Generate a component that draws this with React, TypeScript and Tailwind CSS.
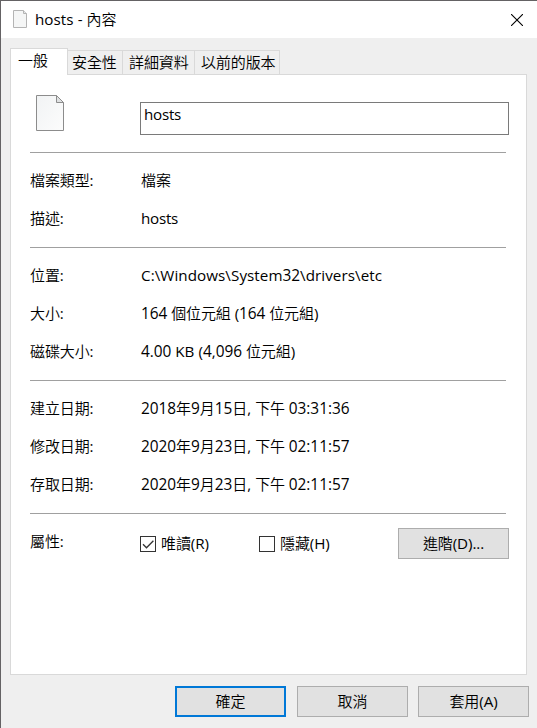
import type { ReactNode } from "react";

// Splits a string into Latin and CJK runs so that each keeps its own metrics.
function Text({ children }: { children: string }) {
  const runs = children.match(/[\u3000-\u9fff]+|[0-9:]+|[^\u3000-\u9fff0-9:]+/g) ?? [];
  return (
    <span className="relative -top-px whitespace-pre">
      {runs.map((run, i) =>
        /[\u3000-\u9fff]/.test(run) ? (
          <span key={i} className="font-['Noto_Sans_CJK_TC',sans-serif] text-[15px] font-[350] tracking-[-0.1px]">{run}</span>
        ) : /[0-9]/.test(run) ? (
          <span key={i} className="text-[15.4px] tracking-[-0.03px]">{run}</span>
        ) : run === "hosts" ? (
          <span key={i} className="text-[15.2px] tracking-[-0.25px]">{run}</span>
        ) : /^[DHAR(). ]+$/.test(run) ? (
          <span key={i} className="text-[15.2px] tracking-[-0.1px]">{run}</span>
        ) : (
          <span key={i} className="text-[15.2px] tracking-[0.06px]">{run}</span>
        ),
      )}
    </span>
  );
}

function FileIcon({ className }: { className: string }) {
  return (
    <svg className={className} viewBox="0 0 28 36" fill="none">
      <defs>
        <linearGradient id="sheet" x1="0" y1="0" x2="1" y2="1">
          <stop offset="0" stopColor="#f1f3f4" />
          <stop offset="1" stopColor="#fcfcfc" />
        </linearGradient>
      </defs>
      <path d="M.5.5H20.5L27.5 7.5V35.5H.5Z" fill="url(#sheet)" stroke="#8c8c8c" />
      <path d="M20.5.5V7.5H27.5Z" fill="#dfe1e2" stroke="#8c8c8c" />
    </svg>
  );
}

function Row({ label, value }: { label: string; value: string }) {
  return (
    <div className="flex h-[38px] items-center">
      <div className="w-[111px]"><Text>{label}</Text></div>
      <Text>{value}</Text>
    </div>
  );
}

function Section({ children }: { children: ReactNode }) {
  return <div className="w-[476px] border-t border-[#a0a0a0] py-[9px]">{children}</div>;
}

function Tab({ label, className }: { label: string; className: string }) {
  return (
    <div className={`flex h-6 items-center border-t border-r border-[#d9d9d9] ${className}`}>
      <Text>{label}</Text>
    </div>
  );
}

function Check({ label, checked }: { label: string; checked?: boolean }) {
  return (
    <label className="flex h-4 w-[119px] items-center gap-[5px]">
      <span className="size-4 shrink-0 border border-[#333]">
        {checked && (
          <svg viewBox="0 0 14 14" className="size-[14px]" fill="none" stroke="#333" strokeWidth="1.3">
            <path d="M2 7.3 5.5 10.8 12.4 3.8" />
          </svg>
        )}
      </span>
      <Text>{label}</Text>
    </label>
  );
}

function Button({ label, primary }: { label: string; primary?: boolean }) {
  return (
    <button
      className={`flex h-[31px] w-[111px] shrink-0 items-center justify-center bg-[#e1e1e1] ${
        primary ? "border-2 border-[#0078d7]" : "border border-[#adadad]"
      }`}
    >
      <Text>{label}</Text>
    </button>
  );
}

export default function App() {
  return (
    <div className="flex h-[728px] w-[537px] flex-col overflow-hidden border-t border-l border-[#646264] bg-[#efefef] font-['Open_Sans','Noto_Sans_CJK_TC',sans-serif] text-[15px] leading-5 text-black">
      <header className="flex h-[37px] shrink-0 items-center bg-white pl-3">
        <svg className="-mt-px h-[18px] w-[14px]" viewBox="0 0 14 18">
          <path d="M.5.5H10.5L13.5 3.5V17.5H.5Z" fill="#f5f6f6" stroke="#b4b4b4" />
          <path d="M10.5.5V3.5H13.5" fill="#e4e6e7" stroke="#b4b4b4" />
        </svg>
        <div className="ml-2 flex-1"><Text>hosts - 內容</Text></div>
        <svg className="mr-[14px] size-3" viewBox="0 0 12 12" stroke="#000" strokeWidth="1.1">
          <path d="M0 0 12 12M12 0 0 12" />
        </svg>
      </header>

      <nav className="ml-[9px] mt-[10px] flex h-[26px] shrink-0 items-end">
        <div className="z-10 -mb-px flex h-[27px] w-[58px] self-start border border-b-0 border-[#d9d9d9] bg-white pl-[7px] pt-[2px]">
          <Text>一般</Text>
        </div>
        <Tab label="安全性" className="w-[55px] pl-1" />
        <Tab label="詳細資料" className="w-[72px] pl-[6px]" />
        <Tab label="以前的版本" className="w-[85px] pl-[6px]" />
      </nav>

      <main className="ml-[9px] h-[601px] w-[517px] shrink-0 border border-[#d9d9d9] bg-white pl-[19px]">
        <div className="flex h-[77px]">
          <FileIcon className="ml-[6px] mt-5 h-9 w-7" />
          <div className="ml-[76px] mt-[27px] h-[33px] w-[369px] border border-[#7a7a7a] pl-[3px] pt-[2px]">
            <Text>hosts</Text>
          </div>
        </div>
        <Section>
          <Row label="檔案類型:" value="檔案" />
          <Row label="描述:" value="hosts" />
        </Section>
        <Section>
          <Row label="位置:" value="C:\Windows\System32\drivers\etc" />
          <Row label="大小:" value="164 個位元組 (164 位元組)" />
          <Row label="磁碟大小:" value="4.00 KB (4,096 位元組)" />
        </Section>
        <Section>
          <Row label="建立日期:" value="2018年9月15日, 下午 03:31:36" />
          <Row label="修改日期:" value="2020年9月23日, 下午 02:11:57" />
          <Row label="存取日期:" value="2020年9月23日, 下午 02:11:57" />
        </Section>
        <div className="w-[476px] border-t border-[#a0a0a0]" />
        <div className="mt-[14px] flex">
          <div className="mt-[4px] w-[110px]"><Text>屬性:</Text></div>
          <div className="mt-2 flex w-[258px]">
            <Check label="唯讀(R)" checked />
            <Check label="隱藏(H)" />
          </div>
          <Button label="進階(D)..." />
        </div>
      </main>

      <footer className="mt-[11px] flex pl-[174px]">
        <Button label="確定" primary />
        <div className="ml-[11px]"><Button label="取消" /></div>
        <div className="ml-[10px]"><Button label="套用(A)" /></div>
      </footer>
    </div>
  );
}
